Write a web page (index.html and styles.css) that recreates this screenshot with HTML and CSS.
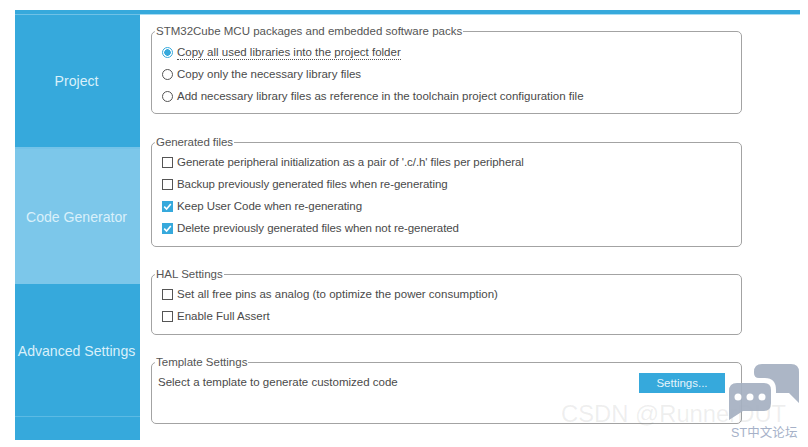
FILE: index.html
```html
<!DOCTYPE html>
<html lang="en">
<head>
  <meta charset="UTF-8" />
  <title>Project Manager</title>
  <link rel="stylesheet" href="styles.css">
</head>
<body>
  <div class="manager">
    <div class="tabs">
      <div class="tab tab-project">Project</div>
      <div class="tab tab-active">Code Generator</div>
      <div class="tab tab-advanced">Advanced Settings</div>
      <div class="tab tab-rest"></div>
    </div>

    <div class="panel">
      <fieldset class="group group-packs">
        <legend>STM32Cube MCU packages and embedded software packs</legend>
        <div class="row"><span class="radio radio-on"></span><span class="focused">Copy all used libraries into the project folder</span></div>
        <div class="row"><span class="radio"></span>Copy only the necessary library files</div>
        <div class="row"><span class="radio"></span>Add necessary library files as reference in the toolchain project configuration file</div>
      </fieldset>

      <fieldset class="group group-files">
        <legend>Generated files</legend>
        <div class="row"><span class="check"></span>Generate peripheral initialization as a pair of '.c/.h' files per peripheral</div>
        <div class="row"><span class="check"></span>Backup previously generated files when re-generating</div>
        <div class="row">
          <span class="check check-on"><svg viewBox="0 0 11 11" width="11" height="11"><path d="M2.2 5.6 L4.6 8 L8.8 3" fill="none" stroke="#fff" stroke-width="1.6"/></svg></span>Keep User Code when re-generating
        </div>
        <div class="row">
          <span class="check check-on"><svg viewBox="0 0 11 11" width="11" height="11"><path d="M2.2 5.6 L4.6 8 L8.8 3" fill="none" stroke="#fff" stroke-width="1.6"/></svg></span>Delete previously generated files when not re-generated
        </div>
      </fieldset>

      <fieldset class="group group-hal">
        <legend>HAL Settings</legend>
        <div class="row"><span class="check"></span>Set all free pins as analog (to optimize the power consumption)</div>
        <div class="row"><span class="check"></span>Enable Full Assert</div>
      </fieldset>

      <fieldset class="group group-template">
        <legend>Template Settings</legend>
        <div class="template-row">
          <span class="template-text">Select a template to generate customized code</span>
          <button type="button">Settings...</button>
        </div>
      </fieldset>
    </div>
  </div>

  <!-- watermark over the screenshot -->
  <div class="mark-csdn">CSDN @RunnerDUT</div>
  <div class="mark-forum">
    <svg class="forum-icon" viewBox="0 0 71 56" width="71" height="56">
      <path d="M33 0 H62 Q70 0 70 8 V39 L60 29 H47 V26 Q47 14 36 14 H30 Q25 14 25 9 V8 Q25 0 33 0 Z" fill="#a6b1c2"/>
      <path d="M8 19 H35 Q42 19 42 26 V39 Q42 47 35 47 H14 L0 56 V27 Q0 19 8 19 Z" fill="#a6b1c2"/>
      <circle cx="9" cy="33" r="3.5" fill="#fff"/>
      <circle cx="21" cy="33" r="3.5" fill="#fff"/>
      <circle cx="33" cy="33" r="3.5" fill="#fff"/>
    </svg>
    <div class="forum-name">ST中文论坛</div>
  </div>
</body>
</html>
```

FILE: styles.css
```css
html, body {
  margin: 0;
  padding: 0;
  background-color: white;
}
body {
  font-family: "Liberation Sans", "Noto Sans CJK SC", sans-serif;
  font-size: 11.5px;
  color: #4a4a4a;
  width: 808px;
  height: 447px;
  overflow: hidden;
  position: relative;
}
.manager {
  display: flex;
  margin: 10px 8px 0 15px;
  height: 426px;
  border-top: 4px solid #36a9dc;
  box-shadow: inset 0 1px 0 #a8dcf2;
}
.tabs {
  width: 125px;
  display: flex;
  flex-direction: column;
  background-color: #36a9dc;
  border-top: 1px solid #6fc1e6;
}
.tab {
  display: flex;
  align-items: center;
  justify-content: center;
  padding-right: 2px;
  color: #d9f0fa;
  font-size: 14.1px;
  box-sizing: border-box;
}
.tab-project {
  height: 134px;
  border-bottom: 2px solid #74c3e8;
}
.tab-active {
  height: 135px;
  background-color: #7cc7ea;
}
.tab-advanced {
  height: 133px;
  padding-top: 1px;
  border-bottom: 1px solid #5cbae4;
}
.tab-rest {
  flex: 1;
}
.panel {
  width: 591px;
  margin-left: 11px;
}
.group {
  margin: 0;
  padding: 3px 0 0 5px;
  border: 1px solid #a3a3a3;
  border-radius: 5px;
  box-sizing: border-box;
}
.group legend {
  padding: 0 1px;
  margin-left: -2px;
  font-size: 11.5px;
  color: #555;
}
.group-packs {
  margin-top: 11px;
  height: 89px;
  padding-top: 4px;
}
.group-files {
  margin-top: 22px;
  height: 111px;
  letter-spacing: -0.07px;
}
.group-hal {
  margin-top: 21px;
  height: 67px;
}
.group-template {
  margin-top: 21px;
  height: 68px;
}
.row {
  display: flex;
  align-items: center;
  height: 22px;
  padding-left: 5px;
}
.radio {
  width: 9px;
  height: 9px;
  border: 1px solid #555;
  border-radius: 50%;
  margin-right: 4px;
  background-color: white;
  flex: none;
}
.radio-on {
  border-color: #36a9dc;
  background: radial-gradient(circle, #36a9dc 0 3px, white 3.5px);
}
.check {
  width: 9px;
  height: 9px;
  border: 1px solid #555;
  margin-right: 4px;
  flex: none;
  display: flex;
}
.check-on {
  border-color: #36a9dc;
  background-color: #36a9dc;
}
.check-on svg {
  margin: -1px;
}
.focused {
  border-bottom: 1px dotted #555;
  line-height: 14px;
  margin-top: 1px;
}
.template-row {
  display: flex;
  align-items: center;
  justify-content: space-between;
  margin-top: 2px;
  padding: 0 16px 0 0;
  height: 20px;
}
.template-text {
  margin: 0 0 2px 1px;
}
.template-row button {
  width: 86px;
  height: 20px;
  border: none;
  padding: 0;
  background-color: #36a9dc;
  color: #e4f4fb;
  font-family: inherit;
  font-size: 11.5px;
}
.mark-csdn {
  position: absolute;
  left: 561px;
  top: 403px;
  font-size: 23.8px;
  line-height: 22px;
  color: rgba(120, 120, 120, 0.12);
}
.mark-forum {
  position: absolute;
  left: 729px;
  top: 364px;
  width: 71px;
}
.forum-icon {
  display: block;
  opacity: 0.93;
}
.forum-name {
  color: #a6b1c8;
  font-size: 12.5px;
  line-height: 12px;
  margin: 7px 0 0 2px;
  letter-spacing: 0.1px;
  white-space: nowrap;
}
```
